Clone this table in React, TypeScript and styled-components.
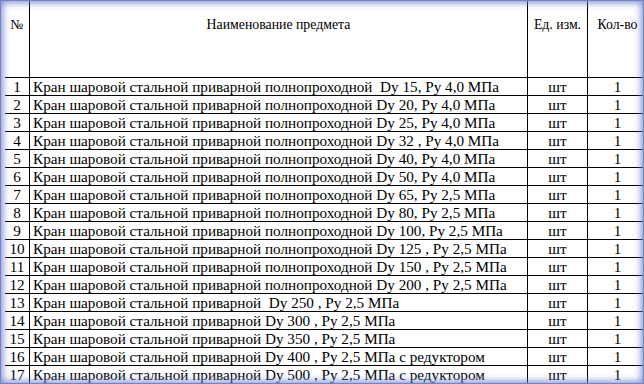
import React from "react";
import styled, { createGlobalStyle } from "styled-components";

const Global = createGlobalStyle`
  html, body { margin: 0; padding: 0; background: #fff; }
  #root { width: 644px; height: 384px; }
`;

const Frame = styled.div`
  position: relative;
  width: 644px;
  height: 384px;
  overflow: hidden;
  background: #fff;
  font-family: "Liberation Serif", "Times New Roman", serif;
  color: #000;
  &::after {
    content: "";
    position: absolute;
    inset: 0;
    pointer-events: none;
    box-shadow: inset 0 0 0 1px #7283c6, inset 0 0 7px 3px rgba(112, 130, 206, 0.85);
  }
`;

const Table = styled.div`
  display: flex;
  flex-direction: column;
  padding-left: 5px;
`;

const Row = styled.div<{ $head?: boolean }>`
  display: grid;
  grid-template-columns: 25px 498px 60px 60px;
  height: ${(p) => (p.$head ? 78 : 18)}px;
  box-sizing: border-box;
  border-bottom: 1px solid #000;
`;

const Cell = styled.div<{ $align?: "left" | "center"; $head?: boolean }>`
  box-sizing: border-box;
  border-right: 1px solid #000;
  display: flex;
  align-items: ${(p) => (p.$head ? "flex-start" : "center")};
  justify-content: ${(p) => (p.$align === "left" ? "flex-start" : "center")};
  padding: ${(p) => (p.$head ? "17px 0 0" : p.$align === "left" ? "0 0 0 3px" : "0")};
  font-size: ${(p) => (p.$head ? "13.8px" : "15.2px")};
  line-height: ${(p) => (p.$head ? "15px" : "17px")};
  white-space: pre;
  overflow: hidden;
`;

const base = "Кран шаровой стальной приварной полнопроходной";
const base2 = "Кран шаровой стальной приварной";

const items: string[] = [
  `${base}  Dy 15, Py 4,0 МПа`,
  `${base} Dy 20, Py 4,0 МПа`,
  `${base} Dy 25, Py 4,0 МПа`,
  `${base} Dy 32 , Py 4,0 МПа`,
  `${base} Dy 40, Py 4,0 МПа`,
  `${base} Dy 50, Py 4,0 МПа`,
  `${base} Dy 65, Py 2,5 МПа`,
  `${base} Dy 80, Py 2,5 МПа`,
  `${base} Dy 100, Py 2,5 МПа`,
  `${base} Dy 125 , Py 2,5 МПа`,
  `${base} Dy 150 , Py 2,5 МПа`,
  `${base} Dy 200 , Py 2,5 МПа`,
  `${base2}  Dy 250 , Py 2,5 МПа`,
  `${base2} Dy 300 , Py 2,5 МПа`,
  `${base2} Dy 350 , Py 2,5 МПа`,
  `${base2} Dy 400 , Py 2,5 МПа с редуктором`,
  `${base2} Dy 500 , Py 2,5 МПа с редуктором`,
];

export default function App() {
  return (
    <>
      <Global />
      <Frame>
        <Table>
          <Row $head>
            <Cell $head>№</Cell>
            <Cell $head>Наименование предмета</Cell>
            <Cell $head>Ед. изм.</Cell>
            <Cell $head>Кол-во</Cell>
          </Row>
          {items.map((name, i) => (
            <Row key={i}>
              <Cell>{i + 1}</Cell>
              <Cell $align="left">{name}</Cell>
              <Cell>шт</Cell>
              <Cell>1</Cell>
            </Row>
          ))}
        </Table>
      </Frame>
    </>
  );
}
